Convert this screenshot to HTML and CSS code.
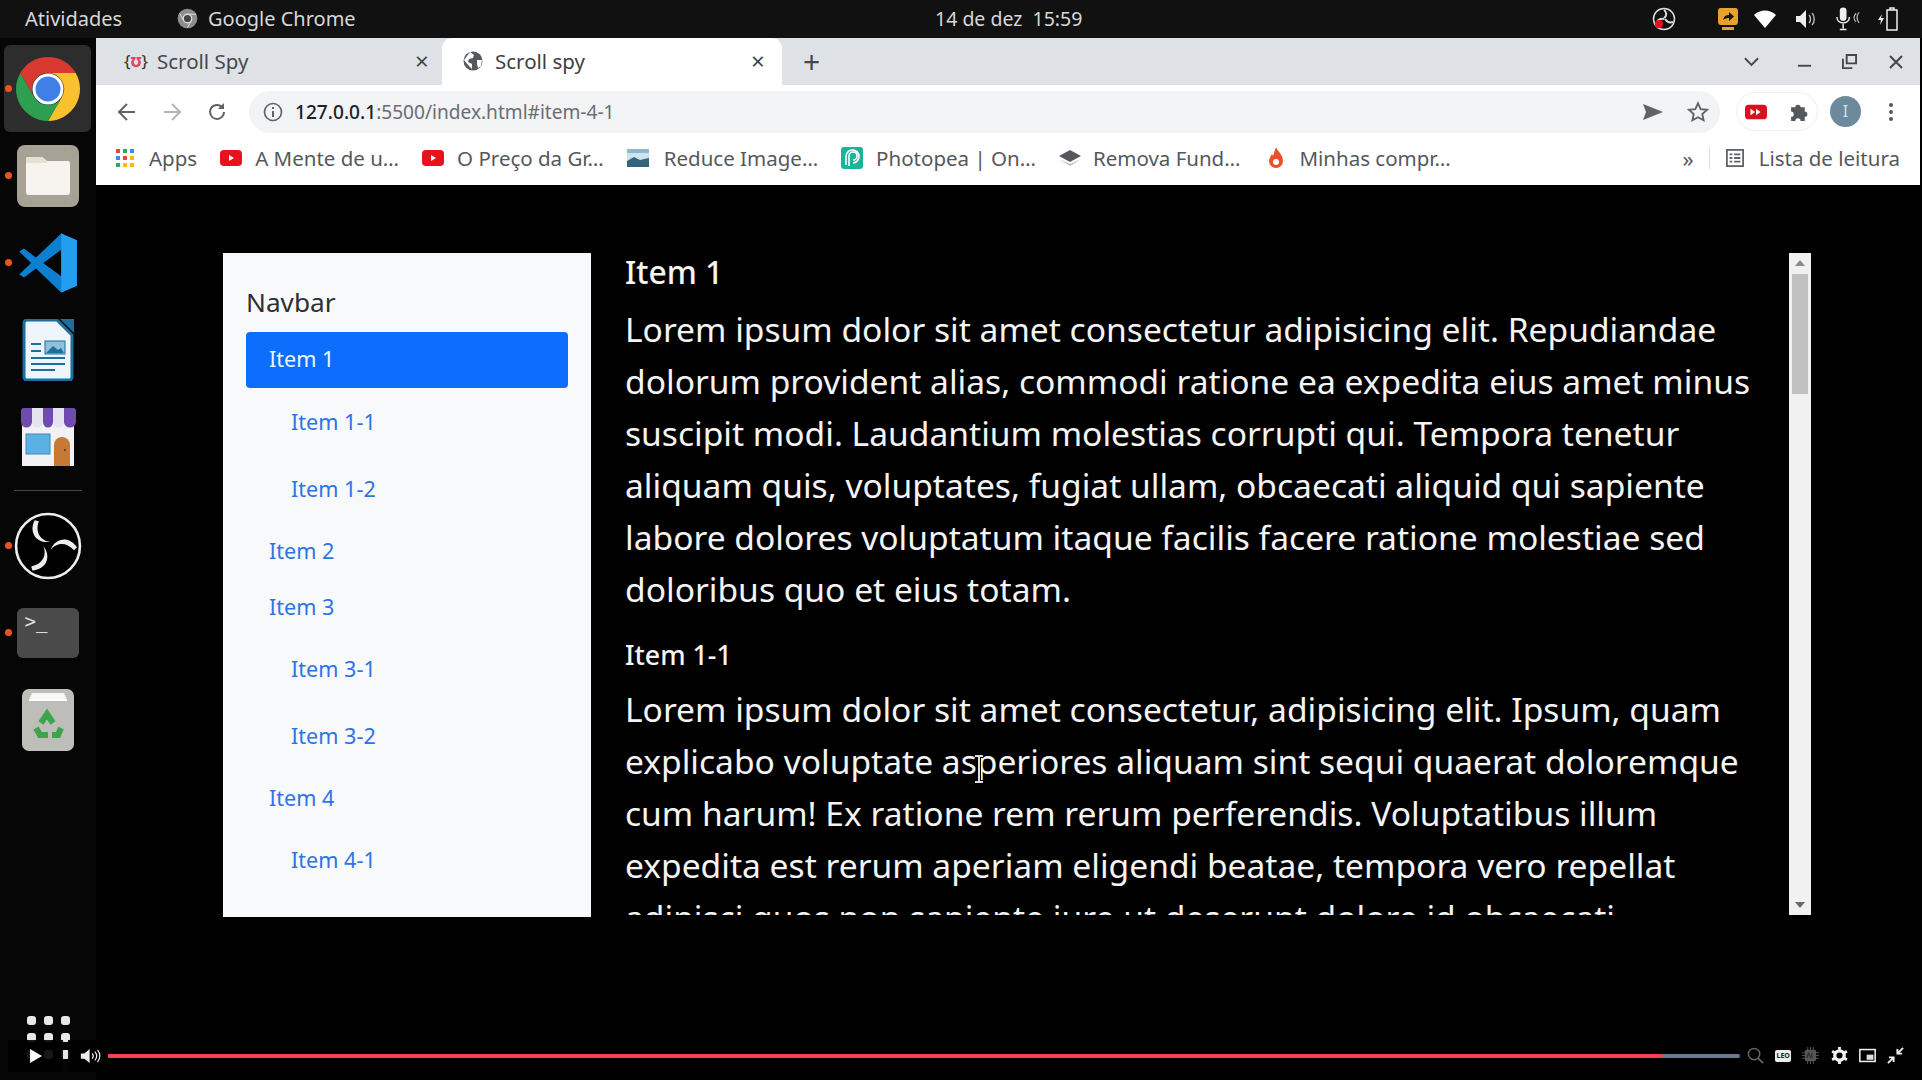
FILE: index.html
```html
<!DOCTYPE html>
<html lang="pt-BR">
<head>
    <meta charset="UTF-8">
    <title>Scroll spy</title>
    <link rel="stylesheet" href="styles.css">
</head>
<body>
<div class="screen">
    <header class="topbar">
        <span class="activities">Atividades</span>
        <span class="app-name">
            <svg class="app-icon" viewBox="0 0 64 64"><circle cx="32" cy="32" r="30" fill="#8d8d8d"/><circle cx="32" cy="32" r="13" fill="#444" stroke="#ddd" stroke-width="4"/><path d="M34 19h24M20 38L8 16M44 38L32 60" stroke="#ddd" stroke-width="3"/></svg>
            Google Chrome
        </span>
        <span class="clock">14 de dez&nbsp; 15:59</span>
        <div class="tray">
            <svg class="tray-obs" viewBox="0 0 24 24"><circle cx="12" cy="12" r="10.500" fill="#111" stroke="#ddd" stroke-width="1.500"/><path d="M12 3c3 2 3 6 0 8M21 15c-3 1-6 0-8-3M5 18c-1-4 2-7 7-6" fill="none" stroke="#ddd" stroke-width="2"/><circle cx="7" cy="17" r="4" fill="#e8101c"/></svg>
            <svg class="tray-share" viewBox="0 0 20 22"><rect x="0" y="0" width="20" height="17" rx="3" fill="#e8a02e"/><rect x="4" y="19" width="12" height="3" fill="#e8a02e"/><path d="M5 12c1-4 3-5 6-5V4l5 4.500-5 4.500v-3c-2 0-4 .5-6 2z" fill="#1c1408"/></svg>
            <svg class="tray-wifi" viewBox="0 0 22 18"><path d="M0 5c6-6 16-6 22 0L11 18z" fill="#fff"/></svg>
            <svg class="tray-sound" viewBox="0 0 22 20"><path d="M0 7h4l6-6v18l-6-6H0z" fill="#eee"/><path d="M13 6c2 2 2 6 0 8M16 4c3 3 3 9 0 12" fill="none" stroke="#bbb" stroke-width="1.400"/></svg>
            <svg class="tray-mic" viewBox="0 0 26 24"><rect x="5" y="0" width="7" height="14" rx="3.500" fill="#eee"/><path d="M2 10c0 8 13 8 13 0M8.500 17v5M5 23h7" fill="none" stroke="#eee" stroke-width="1.500"/><path d="M22 6c-3 3-3 6 0 9M25 5c-3 4-3 7 0 11" fill="none" stroke="#bbb" stroke-width="1.200"/></svg>
            <svg class="tray-battery" viewBox="0 0 22 24"><path d="M5 7L1 13h3l-1 5 4-7H4z" fill="#eee"/><path d="M10 3h10v20H10zM13 3V1h4v2" fill="none" stroke="#eee" stroke-width="1.500"/></svg>
        </div>
    </header>

    <div class="desk">
        <nav class="dock">
            <div class="dock-item dock-active has-dot">
                <svg class="ic-chrome" viewBox="0 0 64 64">
                    <path d="M4.300 16A32 32 0 0 1 59.700 16H32A16 16 0 0 0 18.100 40Z" fill="#d93a30"/>
                    <path d="M59.700 16A32 32 0 0 1 32 64L45.900 40A16 16 0 0 0 32 16Z" fill="#fbc02d"/>
                    <path d="M32 64A32 32 0 0 1 4.300 16L18.100 40A16 16 0 0 0 45.900 40Z" fill="#2e9e50"/>
                    <circle cx="32" cy="32" r="15.500" fill="#fff"/><circle cx="32" cy="32" r="12.500" fill="#3f7fe6"/>
                </svg>
            </div>
            <div class="dock-item has-dot">
                <svg class="ic-files" viewBox="0 0 62 62"><rect width="62" height="62" rx="8" fill="#a8a296"/><path d="M9 14a2 2 0 0 1 2-2h14l5 4h21a2 2 0 0 1 2 2v29a3 3 0 0 1-3 3H12a3 3 0 0 1-3-3z" fill="#f7f4ef"/><path d="M9 14a2 2 0 0 1 2-2h14l5 4v2H9z" fill="#e6e0d6"/></svg>
            </div>
            <div class="dock-item has-dot">
                <svg class="ic-code" viewBox="0 0 100 100"><path fill-rule="evenodd" d="M72 1L30 41 10 26 2 31l20 19L2 69l8 5 20-15 42 40 26-11V12zM72 28L42 50l30 22z" fill="#0b7fd0"/><path d="M72 1l26 11v76L72 99V72 28z" fill="#229df0"/></svg>
            </div>
            <div class="dock-item">
                <svg class="ic-writer" viewBox="0 0 52 62"><path d="M2 4a3 3 0 0 1 3-3h30l15 15v42a3 3 0 0 1-3 3H5a3 3 0 0 1-3-3z" fill="#eef6fb" stroke="#1c6f9c" stroke-width="3"/><path d="M38 0h14v14z" fill="#1c6f9c"/><path d="M9 24h10v2H9zM9 31h10v2H9zM9 38h34v2H9zM9 44h34v2H9zM9 50h24v2H9z" fill="#1c6f9c"/><rect x="23" y="22" width="20" height="13" fill="#8fc0dc" stroke="#1c6f9c"/><path d="M24 34l7-7 5 4 3-2 3 5z" fill="#1c6f9c"/></svg>
            </div>
            <div class="dock-item">
                <svg class="ic-store" viewBox="0 0 60 60"><rect x="4" y="12" width="52" height="47" fill="#f2f2f4"/><rect x="8" y="27" width="24" height="20" fill="#5bb0e4" stroke="#3d8dbc"/><path d="M36 59V38a8 8 0 0 1 16 0v21z" fill="#c67a34"/><circle cx="47" cy="43" r="1" fill="#432"/><path d="M14 1h11v14a5.500 5.500 0 0 1-11 0zM35 1h11v14a5.500 5.500 0 0 1-11 0z" fill="#e4e2ee"/><path d="M3 5a3 3 0 0 1 3-4h8v14a5.500 5.500 0 0 1-11 0zM25 1h10v14a5 5.500 0 0 1-10 0zM46 1h9a3 3 0 0 1 3 4v10a6 5.500 0 0 1-12 0z" fill="#6f4bb0"/></svg>
            </div>
            <div class="dock-sep"></div>
            <div class="dock-item has-dot">
                <svg class="ic-obs" viewBox="0 0 66 66">
                    <circle cx="33" cy="33" r="31" fill="#000" stroke="#eee" stroke-width="2.500"/>
                    <g fill="#eee">
                        <path d="M20 8C14 20 22 31 35 29C27 28 20 21 24 9Z"/>
                        <path d="M20 8C14 20 22 31 35 29C27 28 20 21 24 9Z" transform="rotate(120 33 33)"/>
                        <path d="M20 8C14 20 22 31 35 29C27 28 20 21 24 9Z" transform="rotate(240 33 33)"/>
                    </g>
                </svg>
            </div>
            <div class="dock-item has-dot">
                <div class="ic-terminal">&gt;_</div>
            </div>
            <div class="dock-item">
                <svg class="ic-trash" viewBox="0 0 52 62"><rect width="52" height="62" rx="7" fill="#bdbdb9"/><path d="M7 11l3-7h32l3 7z" fill="#f7f7f5"/><rect x="7" y="10" width="38" height="2" fill="#fff"/><g fill="none" stroke="#3ea44a" stroke-width="6"><path d="M19 34l6-9 6 9"/><path d="M14 39l4 7h8"/><path d="M30 46h6l3-7"/></g></svg>
            </div>
            <div class="dock-grid"><i></i><i></i><i></i><i></i><i></i><i></i><i></i><i></i><i></i></div>
        </nav>

        <main class="browser">
            <div class="tabstrip">
                <div class="tab">
                    <span class="tab-fav-code">{<b>ʊ</b>}</span>
                    <span class="tab-title">Scroll Spy</span>
                    <span class="tab-x">×</span>
                </div>
                <div class="tab tab-active">
                    <svg class="tab-globe" viewBox="0 0 20 20"><circle cx="10" cy="10" r="9.500" fill="#55585c"/><path d="M7 1l4 3-1 3-4 1-1 3 4 2v5L5 14 1 9zM14 9h5l-1 6-3 2-1-4z" fill="#fff"/></svg>
                    <span class="tab-title">Scroll spy</span>
                    <span class="tab-x">×</span>
                </div>
                <span class="tab-plus">+</span>
                <div class="win-btns">
                    <svg class="win-chevron" viewBox="0 0 16 10"><path d="M1 1l7 7 7-7" fill="none" stroke="#44474a" stroke-width="2"/></svg>
                    <svg class="win-min" viewBox="0 0 16 12"><path d="M1 10h14" stroke="#44474a" stroke-width="2"/></svg>
                    <svg class="win-max" viewBox="0 0 16 16"><path d="M5 1h10v9H5zM1 5v10h10" fill="none" stroke="#44474a" stroke-width="2"/></svg>
                    <svg class="win-close" viewBox="0 0 14 14"><path d="M1 1l12 12M13 1L1 13" stroke="#44474a" stroke-width="2"/></svg>
                </div>
            </div>

            <div class="toolbar">
                <svg class="tool-ic tool-back" viewBox="0 0 20 20"><path d="M18 10H3M10 2l-8 8 8 8" fill="none" stroke="#5f6368" stroke-width="2"/></svg>
                <svg class="tool-ic tool-fwd" viewBox="0 0 20 20"><path d="M2 10h15M10 2l8 8-8 8" fill="none" stroke="#b4b7ba" stroke-width="2"/></svg>
                <svg class="tool-ic tool-reload" viewBox="0 0 20 20"><path d="M17 10a7 7 0 1 1-2-5" fill="none" stroke="#5f6368" stroke-width="2"/><path d="M17 1v6h-6z" fill="#5f6368"/></svg>
                <div class="omnibox">
                    <svg class="info-ic" viewBox="0 0 20 20"><circle cx="10" cy="10" r="8.500" fill="none" stroke="#5f6368" stroke-width="1.600"/><path d="M10 9v6M10 5v2" stroke="#5f6368" stroke-width="2"/></svg>
                    <span class="url"><b>127.0.0.1</b>:5500/index.html#item-4-1</span>
                    <svg class="send-ic" viewBox="0 0 20 16"><path d="M0 0l20 8-20 8 3-8zM3 7h8v2H3z" fill="#5f6368"/></svg>
                    <svg class="star-ic" viewBox="0 0 24 24"><path d="M12 2.500l2.900 6.300 6.900.8-5.100 4.700 1.400 6.800-6.100-3.400-6.100 3.400 1.400-6.800-5.100-4.700 6.900-.8z" fill="none" stroke="#5f6368" stroke-width="2"/></svg>
                </div>
                <div class="ext-pill">
                    <svg class="ext-yt" viewBox="0 0 24 16"><rect width="24" height="16" rx="4" fill="#d8111e"/><path d="M6 4.500l5 3.500-5 3.500zM12 4.500l5 3.500-5 3.500z" fill="#fff"/></svg>
                    <svg class="ext-puzzle" viewBox="0 0 20 20"><path d="M2 6h4a2.500 2.500 0 1 1 5 0h4v4a2.500 2.500 0 1 1 0 5v4h-4a2.500 2.500 0 1 0-5 0H2v-4a2.500 2.500 0 1 0 0-5z" fill="#55585c"/></svg>
                </div>
                <span class="avatar">I</span>
                <div class="kebab"><i></i><i></i><i></i></div>
            </div>

            <div class="bookmarks">
                <div class="bm">
                    <svg class="bm-ic" viewBox="0 0 18 18"><g fill="#e8453c"><rect width="4" height="4"/></g><rect x="7" width="4" height="4" fill="#34a853"/><rect x="14" width="4" height="4" fill="#4285f4"/><rect y="7" width="4" height="4" fill="#4285f4"/><rect x="7" y="7" width="4" height="4" fill="#e8453c"/><rect x="14" y="7" width="4" height="4" fill="#fbbc05"/><rect y="14" width="4" height="4" fill="#34a853"/><rect x="7" y="14" width="4" height="4" fill="#fbbc05"/><rect x="14" y="14" width="4" height="4" fill="#fbbc05"/></svg>
                    <span>Apps</span>
                </div>
                <div class="bm">
                    <svg class="bm-ic bm-yt" viewBox="0 0 22 16"><rect width="22" height="16" rx="4" fill="#e8111d"/><path d="M9 5l5 3-5 3z" fill="#fff"/></svg>
                    <span>A Mente de u…</span>
                </div>
                <div class="bm">
                    <svg class="bm-ic bm-yt" viewBox="0 0 22 16"><rect width="22" height="16" rx="4" fill="#e8111d"/><path d="M9 5l5 3-5 3z" fill="#fff"/></svg>
                    <span>O Preço da Gr…</span>
                </div>
                <div class="bm">
                    <svg class="bm-ic bm-img" viewBox="0 0 22 18"><rect width="22" height="18" fill="#cfe3ee"/><path d="M0 12l7-4 6 3 9-2v9H0z" fill="#34647c"/><rect width="22" height="4" fill="#8fb8d0"/></svg>
                    <span>Reduce Image…</span>
                </div>
                <div class="bm">
                    <svg class="bm-ic bm-photopea" viewBox="0 0 22 22"><rect width="22" height="22" rx="3" fill="#1bb39a"/><path d="M8 19V9a4 4 0 1 1 4 4M5 18V9a6.500 6.500 0 1 1 7 7" fill="none" stroke="#fff" stroke-width="1.600"/></svg>
                    <span>Photopea | On…</span>
                </div>
                <div class="bm">
                    <svg class="bm-ic bm-remove" viewBox="0 0 22 16"><path d="M11 0l11 6-11 6L0 6z" fill="#55585c"/><path d="M0 9l11 7 11-7-11 5z" fill="#bbb"/></svg>
                    <span>Remova Fund…</span>
                </div>
                <div class="bm">
                    <svg class="bm-ic bm-flame" viewBox="0 0 16 22"><path d="M8 0c1 4 7 7 7 14a7 7 0 0 1-14 0c0-3 2-5 3-7l1 2c1-3 2-6 3-9z" fill="#e8502a"/><circle cx="8" cy="15" r="3" fill="#fff"/></svg>
                    <span>Minhas compr…</span>
                </div>
                <span class="bm-more">»</span>
                <span class="bm-sep"></span>
                <div class="bm bm-reading">
                    <svg class="bm-ic" viewBox="0 0 20 20"><rect x="1" y="1" width="18" height="18" fill="none" stroke="#5f6368" stroke-width="2"/><path d="M4 6h3M9 6h7M4 10h3M9 10h7M4 14h3M9 14h7" stroke="#5f6368" stroke-width="2"/></svg>
                    <span>Lista de leitura</span>
                </div>
            </div>

            <div class="page">
                <aside class="sidebar">
                    <div class="brand">Navbar</div>
                    <a class="pill pill-active">Item 1</a>
                    <div class="nested">
                        <a class="pill">Item 1-1</a>
                        <a class="pill">Item 1-2</a>
                    </div>
                    <a class="pill">Item 2</a>
                    <a class="pill">Item 3</a>
                    <div class="nested">
                        <a class="pill">Item 3-1</a>
                        <a class="pill">Item 3-2</a>
                    </div>
                    <a class="pill">Item 4</a>
                    <div class="nested">
                        <a class="pill">Item 4-1</a>
                    </div>
                </aside>
                <section class="spy">
                    <h4>Item 1</h4>
                    <p>Lorem ipsum dolor sit amet consectetur adipisicing elit. Repudiandae<br>
                    dolorum provident alias, commodi ratione ea expedita eius amet minus<br>
                    suscipit modi. Laudantium molestias corrupti qui. Tempora tenetur<br>
                    aliquam quis, voluptates, fugiat ullam, obcaecati aliquid qui sapiente<br>
                    labore dolores voluptatum itaque facilis facere ratione molestiae sed<br>
                    doloribus quo et eius totam.</p>
                    <h5>Item 1-1</h5>
                    <p>Lorem ipsum dolor sit amet consectetur, adipisicing elit. Ipsum, quam<br>
                    explicabo voluptate asperiores aliquam sint sequi quaerat doloremque<br>
                    cum harum! Ex ratione rem rerum perferendis. Voluptatibus illum<br>
                    expedita est rerum aperiam eligendi beatae, tempora vero repellat<br>
                    adipisci quos non sapiente iure ut deserunt dolore id obcaecati</p>
                </section>
                <div class="scrollbar">
                    <span class="sb-up"></span>
                    <span class="sb-thumb"></span>
                    <span class="sb-down"></span>
                </div>
            </div>
        </main>
    </div>

    <svg class="cursor" viewBox="0 0 12 28"><path d="M2 1h8M2 27h8M6 1v26" stroke="#000" stroke-width="4"/><path d="M2 1h8M2 27h8M6 1v26" stroke="#ddd" stroke-width="2"/></svg>

    <div class="player">
        <span class="play-btn"><svg viewBox="0 0 14 16"><path d="M1 1l12 7-12 7z" fill="#fff"/></svg></span>
        <span class="vol-btn"><svg viewBox="0 0 22 16"><path d="M0 5h4l6-5v16l-6-5H0z" fill="#eee"/><path d="M13 5c1.500 2 1.500 4 0 6M16 3c2.500 3 2.500 7 0 10M19 1c3.500 4 3.500 10 0 14" fill="none" stroke="#eee" stroke-width="1.400"/></svg></span>
        <div class="progress"><span class="progress-done"></span></div>
        <div class="player-icons">
            <svg viewBox="0 0 18 18"><circle cx="7.500" cy="7.500" r="6" fill="none" stroke="#666" stroke-width="1.600"/><path d="M12 12l5 5" stroke="#666" stroke-width="1.800"/></svg>
            <span class="leo">LEO</span>
            <svg viewBox="0 0 18 18"><path d="M0 6h18M0 9h18M0 12h18M6 0v18M9 0v18M12 0v18" stroke="#555" stroke-width="1"/><rect x="3" y="3" width="12" height="12" rx="2" fill="#555"/><path d="M5 12l2-6 2 6M10.500 6v6" fill="none" stroke="#222" stroke-width="1"/></svg>
            <svg viewBox="0 0 18 18"><circle cx="9" cy="9" r="5" fill="none" stroke="#f2f2f2" stroke-width="3.500"/><path d="M9 0v3M9 15v3M1.200 4.500l2.600 1.500M14.200 12l2.600 1.500M1.200 13.500L3.800 12M14.200 6l2.600-1.500" stroke="#f2f2f2" stroke-width="3"/></svg>
            <svg viewBox="0 0 20 16"><rect x="1" y="1" width="18" height="14" fill="none" stroke="#eee" stroke-width="1.800"/><rect x="9" y="7" width="8" height="6" fill="#ddd"/></svg>
            <svg viewBox="0 0 18 18"><path d="M17 1l-6 6M11 2v5h5M1 17l6-6M2 11h5v5" fill="none" stroke="#eee" stroke-width="2"/></svg>
        </div>
    </div>
</div>
</body>
</html>
```

FILE: styles.css
```css
* {
    box-sizing: border-box;
}
body {
    margin: 0;
    background: #000;
    font-family: "Noto Sans", "Open Sans", sans-serif;
    overflow: hidden;
}
svg {
    display: block;
    flex: none;
}
.screen {
    position: relative;
    width: 1922px;
    height: 1080px;
    display: flex;
    flex-direction: column;
    overflow: hidden;
}

/* top bar */
.topbar {
    height: 38px;
    flex: none;
    background: #111;
    color: #d8d8d8;
    font-size: 20px;
    display: flex;
    align-items: center;
    padding: 0 0 1px 25px;
    position: relative;
}
.activities {
    width: 152px;
}
.app-name {
    display: flex;
    align-items: center;
    gap: 10px;
    width: 758px;
}
.app-icon {
    width: 21px;
    height: 23px;
}
.clock {
    width: 160px;
    font-size: 19.500px;
    white-space: nowrap;
}
.tray {
    margin-left: auto;
    display: flex;
    align-items: center;
    height: 100%;
    padding-right: 23px;
}
.tray-obs { width: 24px; height: 24px; margin-right: 42px; }
.tray-share { width: 20px; height: 22px; margin-right: 16px; }
.tray-wifi { width: 22px; height: 18px; margin-right: 20px; }
.tray-sound { width: 22px; height: 20px; margin-right: 17px; }
.tray-mic { width: 25px; height: 24px; margin-right: 17px; }
.tray-battery { width: 22px; height: 24px; }

.desk {
    flex: 1;
    display: flex;
    min-height: 0;
}

/* dock */
.dock {
    width: 96px;
    flex: none;
    background: #060606;
    padding-top: 7px;
    display: flex;
    flex-direction: column;
    align-items: center;
}
.dock-item {
    width: 87px;
    height: 87px;
    flex: none;
    display: flex;
    align-items: center;
    justify-content: center;
    position: relative;
    margin-left: -1px;
}
.dock-active {
    background: #2d2d2d;
    border-radius: 6px;
}
.has-dot::before {
    content: "";
    position: absolute;
    left: 1px;
    top: 40px;
    width: 7px;
    height: 7px;
    border-radius: 50%;
    background: #e95420;
}
.ic-chrome { width: 64px; height: 64px; }
.ic-files { width: 62px; height: 62px; }
.ic-code { width: 62px; height: 60px; }
.ic-writer { width: 52px; height: 62px; }
.ic-store { width: 60px; height: 60px; }
.ic-obs { width: 68px; height: 68px; }
.ic-trash { width: 52px; height: 62px; }
.ic-terminal {
    width: 62px;
    height: 50px;
    background: #4a4a4a;
    border-radius: 6px;
    color: #ddd;
    font-size: 19px;
    line-height: 20px;
    padding: 3px 0 0 8px;
    font-family: "DejaVu Sans Mono", monospace;
}
.dock-sep {
    width: 68px;
    height: 1px;
    background: #444;
    margin: 10px 0 11px 0;
}
.dock-grid {
    margin-top: auto;
    margin-bottom: 21px;
    display: grid;
    grid-template-columns: repeat(3, 9px);
    gap: 8px;
}
.dock-grid i {
    display: block;
    height: 9px;
    border-radius: 3px;
    background: #e8e8e8;
}

/* browser */
.browser {
    flex: 1;
    margin-right: 2px;
    display: flex;
    flex-direction: column;
    min-width: 0;
}
.tabstrip {
    height: 47px;
    flex: none;
    background: #dee1e6;
    display: flex;
    align-items: flex-end;
    color: #45494d;
    font-size: 20.500px;
    position: relative;
}
.tab {
    width: 346px;
    height: 47px;
    display: flex;
    align-items: center;
    padding: 0 0 2px 28px;
    position: relative;
}
.tab-active {
    width: 340px;
    background: #fff;
    border-radius: 10px 10px 0 0;
    padding-left: 21px;
    color: #3c4043;
}
.tab-fav-code {
    width: 33px;
    font-size: 17px;
    color: #333;
    white-space: nowrap;
}
.tab-fav-code b {
    color: #e4405f;
    font-weight: 700;
}
.tab-globe {
    width: 20px;
    height: 20px;
    margin-right: 12px;
}
.tab-title {
    flex: 1;
}
.tab-x {
    font-size: 24px;
    line-height: 1;
    width: 27px;
    color: #444;
}
.tab-active .tab-x {
    width: 31px;
}
.tab-plus {
    align-self: center;
    margin-left: 21px;
    font-size: 30px;
    line-height: 1;
    color: #45494d;
}
.win-btns {
    margin-left: auto;
    align-self: center;
    display: flex;
    align-items: center;
    padding-right: 17px;
}
.win-chevron { width: 15px; height: 10px; margin-right: 38px; }
.win-min { width: 15px; height: 12px; margin-right: 30px; }
.win-max { width: 15px; height: 15px; margin-right: 32px; }
.win-close { width: 14px; height: 14px; }

.toolbar {
    height: 50px;
    flex: none;
    background: #fff;
    display: flex;
    align-items: center;
    padding: 3px 0 0 21px;
}
.tool-ic {
    width: 20px;
    height: 20px;
    margin-right: 25px;
}
.tool-reload {
    margin-right: 22px;
}
.omnibox {
    width: 1471px;
    height: 42px;
    background: #f1f3f4;
    border-radius: 21px;
    display: flex;
    align-items: center;
    padding-left: 14px;
}
.info-ic {
    width: 20px;
    height: 20px;
    margin-right: 12px;
}
.url {
    font-size: 19.100px;
    color: #6a6e72;
    white-space: nowrap;
}
.url b {
    font-weight: 500;
    color: #202124;
}
.send-ic {
    width: 20px;
    height: 16px;
    margin-left: auto;
    margin-right: 24px;
}
.star-ic {
    width: 22px;
    height: 22px;
    margin-right: 11px;
}
.ext-pill {
    width: 82px;
    height: 39px;
    margin-left: 16px;
    border: 1px solid #eee;
    border-radius: 20px;
    display: flex;
    align-items: center;
    padding-left: 8px;
    gap: 22px;
}
.ext-yt { width: 22px; height: 16px; }
.ext-puzzle { width: 21px; height: 21px; }
.avatar {
    width: 31px;
    height: 31px;
    border-radius: 50%;
    margin-left: 12px;
    background: #6d8a9c;
    color: #cfe0ea;
    font-size: 16px;
    text-align: center;
    line-height: 31px;
}
.kebab {
    margin-left: 28px;
    display: flex;
    flex-direction: column;
    gap: 3px;
}
.kebab i {
    width: 4px;
    height: 4px;
    border-radius: 50%;
    background: #55585c;
}

.bookmarks {
    height: 50px;
    flex: none;
    background: #fff;
    display: flex;
    align-items: center;
    padding: 0 0 4px 20px;
    gap: 23px;
    font-size: 20.500px;
    color: #55585c;
    white-space: nowrap;
}
.bm {
    display: flex;
    align-items: center;
    gap: 15px;
}
.bm-ic {
    width: 18px;
    height: 18px;
}
.bm-yt { width: 22px; height: 16px; margin-right: -2px; }
.bm-img { width: 22px; height: 18px; }
.bm-photopea { width: 22px; height: 22px; margin-right: -2px; }
.bm-remove { width: 22px; height: 16px; margin-right: -3px; }
.bm-flame { width: 16px; height: 22px; margin-left: 5px; }
.bm-more {
    margin-left: auto;
    font-size: 22px;
    line-height: 1;
    margin-right: -8px;
}
.bm-sep {
    width: 1px;
    height: 22px;
    background: #ddd;
    margin-right: -7px;
}
.bm-reading {
    padding-right: 20px;
}

/* page */
.page {
    flex: 1;
    background: #000;
    padding: 68px 0 0 127px;
    display: flex;
    align-items: flex-start;
}
.sidebar {
    width: 368px;
    height: 664px;
    flex: none;
    background: #f8f9fa;
    padding: 31px 23px 0;
}
.brand {
    font-size: 26.200px;
    line-height: 36px;
    height: 48px;
    color: #2c2f33;
}
.pill {
    display: block;
    height: 56px;
    line-height: 56px;
    padding-left: 23px;
    font-size: 21.600px;
    color: #2f74e6;
    border-radius: 4px;
}
.pill-active {
    line-height: 54px;
    background: #0d6efd;
    color: #eef4ff;
}
.nested {
    margin: 6px 0;
    padding-left: 22px;
    display: flex;
    flex-direction: column;
    gap: 11px;
}
.spy {
    width: 1164px;
    height: 665px;
    margin: -3px 0 0 34px;
    padding-top: 3px;
    flex: none;
    overflow: hidden;
    color: #f4f4f4;
}
.spy h4 {
    margin: 0 0 12px;
    font-size: 31.800px;
    line-height: 38px;
    font-weight: 500;
}
.spy h5 {
    margin: 22px 0 10px;
    font-size: 26.800px;
    line-height: 36px;
    font-weight: 500;
}
.spy p {
    margin: 0;
    font-size: 33.600px;
    line-height: 52px;
    white-space: nowrap;
}
.scrollbar {
    width: 22px;
    height: 662px;
    flex: none;
    background: #f1f1f1;
    display: flex;
    flex-direction: column;
    align-items: center;
    padding-top: 7px;
}
.sb-up,
.sb-down {
    width: 0;
    height: 0;
    border-left: 5px solid transparent;
    border-right: 5px solid transparent;
}
.sb-up {
    border-bottom: 6px solid #8a8a8a;
}
.sb-thumb {
    width: 16px;
    height: 120px;
    margin-top: 8px;
    background: #c1c1c1;
}
.sb-down {
    margin-top: auto;
    margin-bottom: 7px;
    border-top: 6px solid #6a6a6a;
}

/* things on top of the recording */
.cursor {
    position: absolute;
    left: 973px;
    top: 755px;
    width: 12px;
    height: 28px;
}
.player {
    position: absolute;
    left: 0;
    right: 0;
    top: 1040px;
    height: 32px;
}
.play-btn,
.vol-btn {
    position: absolute;
    top: 0;
    height: 32px;
    display: flex;
    align-items: center;
    background: rgba(0, 0, 0, 0.9);
}
.play-btn {
    left: 8px;
    width: 55px;
    padding-left: 21px;
}
.play-btn svg {
    width: 14px;
    height: 16px;
}
.vol-btn {
    left: 68px;
    width: 36px;
    padding-left: 12px;
}
.vol-btn svg {
    width: 21px;
    height: 14px;
}
.progress {
    position: absolute;
    left: 108px;
    top: 14px;
    width: 1632px;
    height: 4px;
    background: #6b7a90;
    border-radius: 2px;
}
.progress-done {
    display: block;
    width: 1554px;
    height: 100%;
    background: #f5404e;
}
.player-icons {
    position: absolute;
    left: 1747px;
    top: 7px;
    width: 157px;
    display: flex;
    justify-content: space-between;
    align-items: center;
}
.player-icons svg {
    width: 17px;
    height: 17px;
}
.leo {
    width: 16px;
    height: 12px;
    background: #eee;
    border-radius: 2px;
    color: #222;
    font-size: 7px;
    font-weight: 700;
    line-height: 12px;
    text-align: center;
}
```
